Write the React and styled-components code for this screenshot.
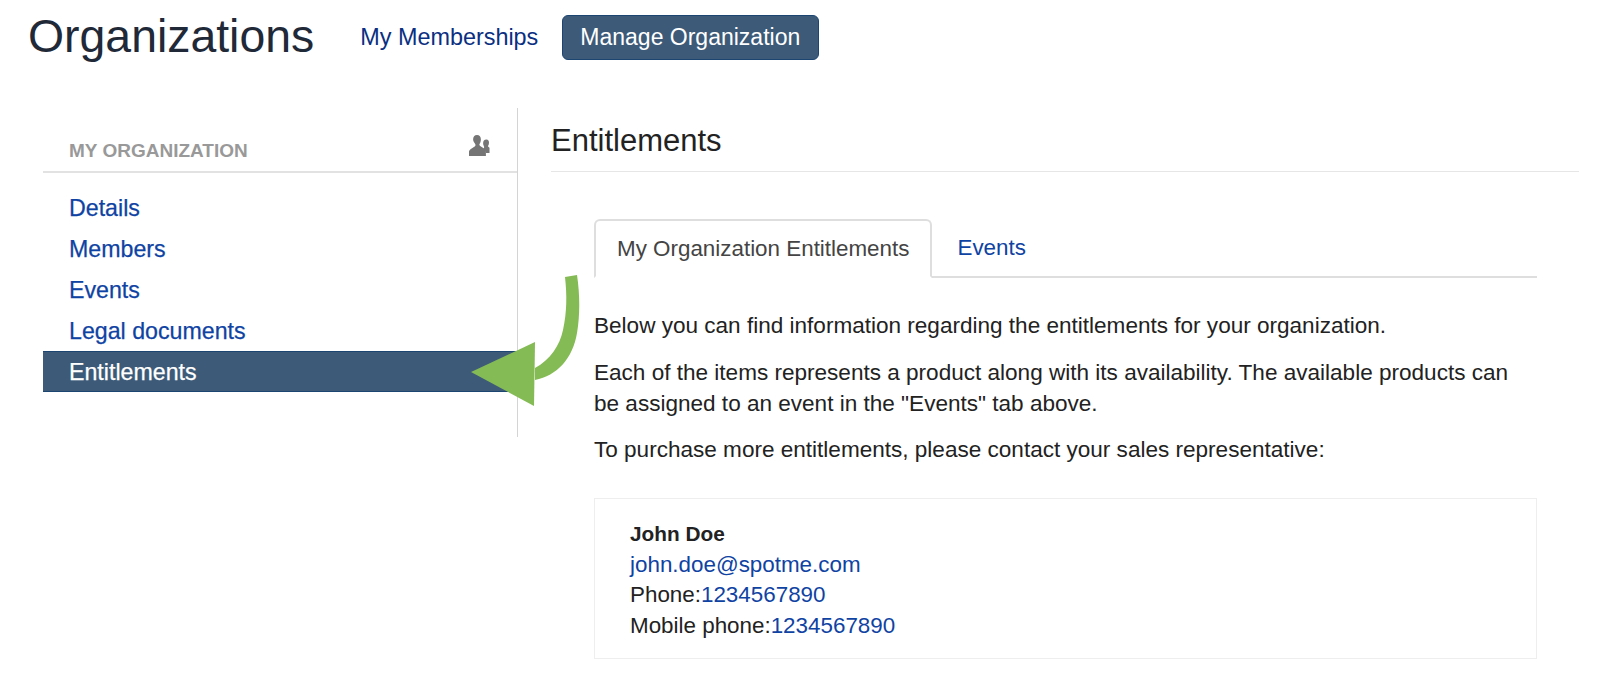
import React from "react";
import styled, { createGlobalStyle } from "styled-components";

const Global = createGlobalStyle`
  html, body { margin: 0; padding: 0; background: #fff; }
  body { font-family: "Liberation Sans", Arial, sans-serif; color: #222; }
  a { text-decoration: none; }
`;
const Page = styled.div`
  position: relative;
  width: 1600px;
  height: 687px;
  overflow: hidden;
`;
const Header = styled.header`
  display: flex;
  align-items: center;
  height: 74px;
  padding-left: 28px;
`;
const Title = styled.h1`
  margin: -2px 46px 0 0;
  font-size: 46.4px;
  line-height: 72px;
  font-weight: 400;
  color: #1f2937;
`;
const HeaderLink = styled.a`
  font-size: 23.4px;
  color: #0b2f82;
  margin-right: 24px;
`;
const ActiveButton = styled.a`
  display: flex;
  align-items: center;
  height: 45px;
  padding: 0 18px 0 17px;
  box-sizing: border-box;
  font-size: 23px;
  color: #fff;
  background: #3d5a78;
  border: 1px solid #1d4571;
  border-radius: 6px;
`;
const Columns = styled.div`
  display: flex;
  align-items: flex-start;
  margin-top: 34px;
  padding-left: 43px;
`;
const Sidebar = styled.aside`
  width: 474px;
  height: 329px;
  border-right: 1px solid #d4d4d4;
  flex: none;
`;
const SideHead = styled.div`
  display: flex;
  align-items: center;
  justify-content: space-between;
  height: 65px;
  padding: 22px 27px 0 26px;
  box-sizing: border-box;
  border-bottom: 2px solid #e2e2e2;
`;
const SideLabel = styled.span`
  font-size: 19px;
  font-weight: 700;
  color: #999;
`;
const IconSvg = styled.svg`
  margin-bottom: 10px;
`;
const NavList = styled.nav`
  display: flex;
  flex-direction: column;
  padding-top: 14px;
`;
const NavItem = styled.a`
  display: flex;
  align-items: center;
  height: 41px;
  padding: 2px 0 0 26px;
  box-sizing: border-box;
  font-size: 23.2px;
  -webkit-text-stroke: 0.25px currentColor;
  color: ${(p) => (p.$active ? "#fff" : "#0f43a3")};
  background: ${(p) => (p.$active ? "#3d5a78" : "transparent")};
  ${(p) => p.$active && "border-top: 1px solid #1d4571; border-bottom: 1px solid #1d4571;"}
`;
const Main = styled.main`
  width: 1028px;
  margin-left: 33px;
  flex: none;
`;
const MainTitle = styled.h2`
  margin: 0;
  height: 64px;
  padding-top: 16px;
  box-sizing: border-box;
  border-bottom: 1px solid #e6e6e6;
  font-size: 31px;
  line-height: 34px;
  font-weight: 400;
  color: #222;
`;
const Content = styled.div`
  margin: 47px 42px 0 43px;
`;
const Tabs = styled.div`
  display: flex;
  height: 57px;
  border-bottom: 2px solid #dedede;
`;
const Tab = styled.a`
  display: flex;
  align-items: center;
  box-sizing: border-box;
  height: ${(p) => (p.$active ? "59px" : "57px")};
  padding: 1px 21px 0;
  font-size: 22.4px;
  color: ${(p) => (p.$active ? "#444" : "#0f43a3")};
  background: ${(p) => (p.$active ? "#fff" : "transparent")};
  margin-right: ${(p) => (p.$active ? "2px" : "0")};
  border: 2px solid ${(p) => (p.$active ? "#dedede" : "transparent")};
  border-bottom-color: ${(p) => (p.$active ? "#fff" : "transparent")};
  border-radius: 6px 6px 0 0;
`;
const Para = styled.p`
  margin: 0 0 15.5px;
  font-size: 22.55px;
  line-height: 31px;
  color: #222;
  &:first-of-type { margin-top: 32px; }
`;
const Card = styled.div`
  margin-top: 33px;
  height: 161px;
  box-sizing: border-box;
  padding: 20px 35px;
  border: 1px solid #eee;
  font-size: 22.4px;
  line-height: 30.5px;
  color: #222;
`;
const Name = styled.div`
  font-weight: 700;
  font-size: 20.8px;
`;
const Link = styled.a`
  color: #0f43a3;
`;
const Overlay = styled.svg`
  position: absolute;
  left: 0;
  top: 0;
  pointer-events: none;
`;

const PeopleIcon = () => (
  <IconSvg width="21" height="21" viewBox="0 0 21 21" fill="#757575" aria-hidden="true">
    <path d="M17.500 4.500c1.700 0 2.600 1.400 2.500 3.300 0 1.200-.4 2.200-.9 2.900-.2.600 0 1 .5 1.400l.9.700V18h-3.500c-.1-1.300-.7-2.200-1.700-2.900l-1.300-.8c.3-.5.800-.9 1-1.500.3-.5.200-1-.1-1.500-.5-.9-.8-2-.8-3.100 0-2 1-3.700 3.400-3.700z" />
    <path d="M8 0c2.500 0 4 2 3.900 4.800-.1 1.800-.7 3.200-1.400 4.200-.3.800 0 1.500.7 2l3.800 2.500c1 .7 1.700 1.500 1.900 2.500V21H0v-4.500c.2-1 .9-1.800 1.900-2.500l3.800-2.500c.7-.5 1-1.200.7-2C5.700 8 4.200 6.600 4.100 4.800 4 2 5.500 0 8 0z" />
  </IconSvg>
);

export default function App() {
  return (
    <Page>
      <Global />
      <Header>
        <Title>Organizations</Title>
        <HeaderLink>My Memberships</HeaderLink>
        <ActiveButton>Manage Organization</ActiveButton>
      </Header>
      <Columns>
        <Sidebar>
          <SideHead>
            <SideLabel>MY ORGANIZATION</SideLabel>
            <PeopleIcon />
          </SideHead>
          <NavList>
            <NavItem>Details</NavItem>
            <NavItem>Members</NavItem>
            <NavItem>Events</NavItem>
            <NavItem>Legal documents</NavItem>
            <NavItem $active>Entitlements</NavItem>
          </NavList>
        </Sidebar>
        <Main>
          <MainTitle>Entitlements</MainTitle>
          <Content>
            <Tabs>
              <Tab $active>My Organization Entitlements</Tab>
              <Tab>Events</Tab>
            </Tabs>
            <Para>Below you can find information regarding the entitlements for your organization.</Para>
            <Para>
              Each of the items represents a product along with its availability. The available products can
              <br />
              be assigned to an event in the "Events" tab above.
            </Para>
            <Para>To purchase more entitlements, please contact your sales representative:</Para>
            <Card>
              <Name>John Doe</Name>
              <div><Link>john.doe@spotme.com</Link></div>
              <div>Phone:<Link>1234567890</Link></div>
              <div>Mobile phone:<Link>1234567890</Link></div>
            </Card>
          </Content>
        </Main>
      </Columns>
      <Overlay width="1600" height="687" viewBox="0 0 1600 687" aria-hidden="true">
        <path fill="#85bb55" d="M565 277 L577 275 C580 295 580 315 577 333 C573 358 557 376 535 380 L535 368 C550 360 560 345 563 330 C567 312 567 295 565 277 Z" />
        <path fill="#85bb55" d="M471 372 L535 342 L534 406 Z" />
      </Overlay>
    </Page>
  );
}
